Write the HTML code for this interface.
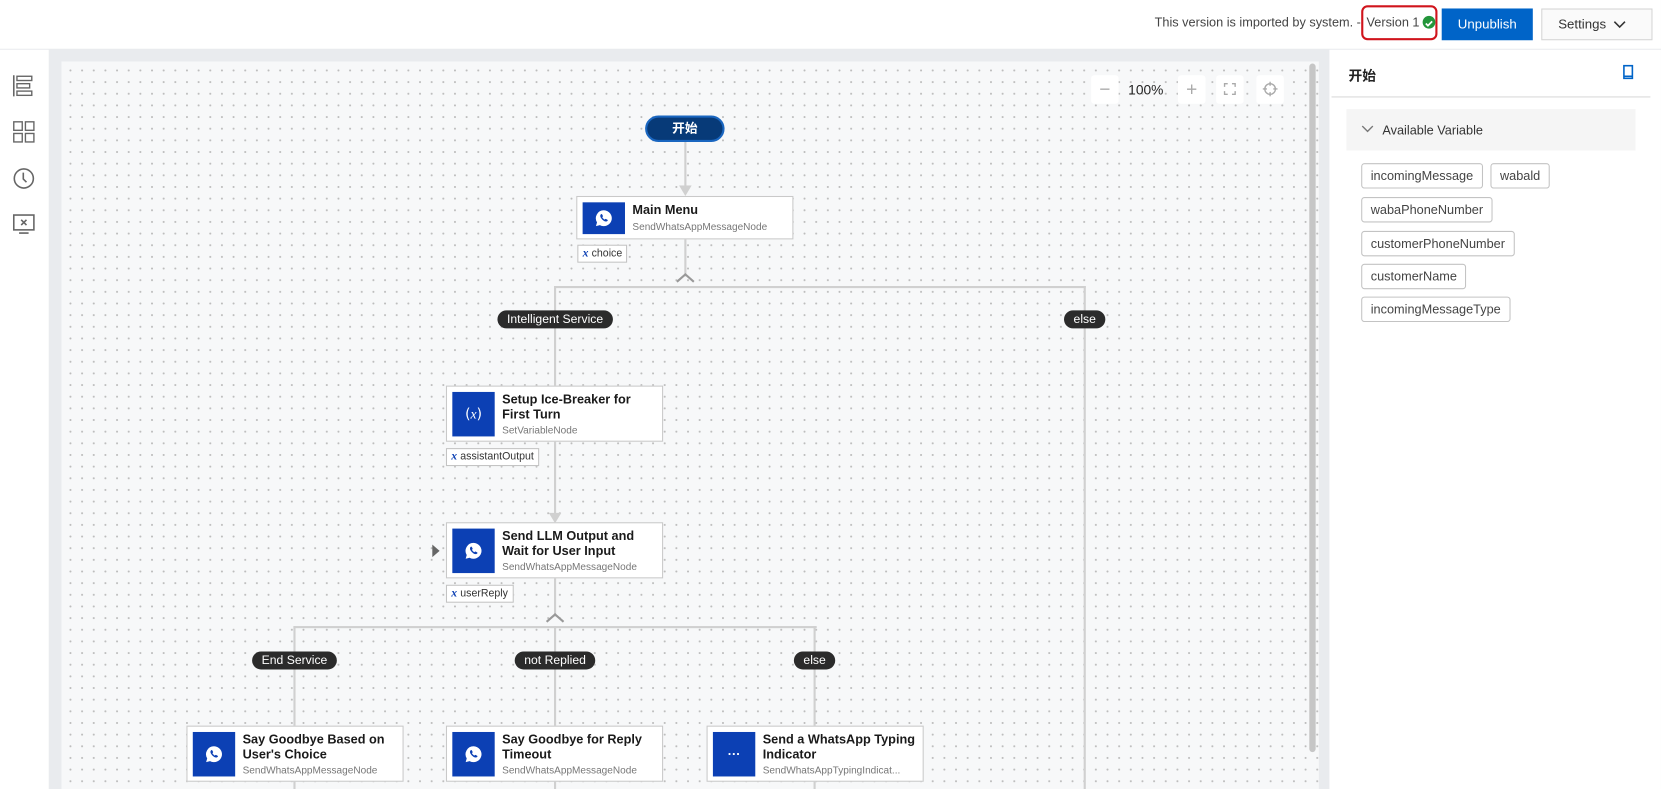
<!DOCTYPE html>
<html><head><meta charset="utf-8"><style>
*{box-sizing:border-box;margin:0;padding:0}
html,body{width:1661px;height:789px;overflow:hidden}
body{background:#e9ebee;font-family:"Liberation Sans","Noto Sans CJK SC",sans-serif;position:relative;color:#222}
#w{position:absolute;left:0;top:0;width:1568px;height:745px;transform:scale(1.0593);transform-origin:0 0;overflow:hidden}
.a{position:absolute}
#top{left:0;top:0;width:1568px;height:46px;background:#fff}
#side{left:0;top:47px;width:46px;height:698px;background:#fff}
#canvas{left:58px;top:58px;width:1187px;height:687px;background-color:#f7f8f9;background-image:radial-gradient(circle,#bdbdbd 0.8px,transparent 1.1px);background-size:11px 11px;background-position:3px 3px;overflow:hidden}
#panel{left:1255px;top:47px;width:313px;height:698px;background:#fff}
.vl{position:absolute;width:2px;background:#d0d0d0}
.hl{position:absolute;height:2px;background:#d0d0d0}
.node{position:absolute;background:#fff;border:1px solid #c9c9c9;width:205px}
.ic{position:absolute;left:5px;top:5px;width:40px;background:#0c40b4;display:flex;align-items:center;justify-content:center;color:#fff}
.tt{position:absolute;left:52px;font-size:12px;font-weight:bold;line-height:14px;color:#1a1a1a}
.st{position:absolute;left:52px;font-size:9.5px;color:#777;white-space:nowrap}
.tag{position:absolute;height:17px;border:1px solid #c3c3c3;background:#fff;font-size:10px;color:#333;line-height:15px;padding:0 4px}
.tag i{font-family:"Liberation Serif",serif;color:#0c40b4;font-weight:bold;font-size:11px;margin-right:3px}
.lab{position:absolute;height:17px;border-radius:9px;background:#2b2b2b;color:#fff;font-size:11.5px;display:flex;align-items:center;padding:1px 9px 0;transform:translateX(-50%);white-space:nowrap}
.zb{position:absolute;top:13px;width:26px;height:27px;background:#fff;border-radius:3px;color:#aaa;text-align:center;line-height:26px;font-size:18px}
.vt{position:absolute;height:24px;border:1px solid #c3c3c3;border-radius:3px;font-size:12px;color:#444;line-height:22px;padding:0 8px}
</style></head><body><div id="w">
<div id="top" class="a">
 <div class="a" style="left:1090px;top:14px;font-size:12px;color:#444">This version is imported by system. - </div>
 <div class="a" style="left:1285px;top:5px;width:72px;height:33px;border:2px solid #d0141c;border-radius:6px"></div>
 <div class="a" style="left:1290px;top:14px;font-size:12px;color:#444">Version 1</div>
 <div class="a" style="left:1343px;top:15px;width:12px;height:12px;border-radius:50%;background:#23953a"><svg width="12" height="12"><path d="M3 6.2l2 2 4-4" stroke="#fff" stroke-width="1.6" fill="none"/></svg></div>
 <div class="a" style="left:1361px;top:8px;width:86px;height:30px;background:#0064c8;color:#fff;font-size:12.5px;text-align:center;line-height:30px">Unpublish</div>
 <div class="a" style="left:1455px;top:8px;width:105px;height:30px;border:1px solid #d5d5d5;background:#fafafa;font-size:12.5px;line-height:28px;padding-left:15px;color:#333">Settings <svg width="12" height="8" style="margin-left:3px"><path d="M1 1.5l5 5 5-5" stroke="#333" stroke-width="1.5" fill="none"/></svg></div>
</div>
<div id="side" class="a">
 <svg class="a" style="left:12px;top:23px" width="20" height="22"><path d="M1 1v20" stroke="#666" stroke-width="1.5"/><rect x="4" y="2" width="14" height="4" fill="none" stroke="#666" stroke-width="1.3"/><rect x="4" y="9" width="12" height="4" fill="none" stroke="#666" stroke-width="1.3"/><rect x="4" y="16" width="14" height="4" fill="none" stroke="#666" stroke-width="1.3"/></svg>
 <svg class="a" style="left:12px;top:67px" width="21" height="21"><rect x="1" y="1" width="8" height="8" fill="none" stroke="#666" stroke-width="1.3"/><rect x="12" y="1" width="8" height="8" fill="none" stroke="#666" stroke-width="1.3"/><rect x="1" y="12" width="8" height="8" fill="none" stroke="#666" stroke-width="1.3"/><rect x="12" y="12" width="8" height="8" fill="none" stroke="#666" stroke-width="1.3"/></svg>
 <svg class="a" style="left:12px;top:111px" width="21" height="21"><circle cx="10.5" cy="10.5" r="9" fill="none" stroke="#666" stroke-width="1.5"/><path d="M10 5v6l3 3" stroke="#666" stroke-width="1.5" fill="none"/></svg>
 <svg class="a" style="left:12px;top:155px" width="21" height="20"><rect x="1" y="1" width="19" height="14" fill="none" stroke="#666" stroke-width="1.5"/><path d="M8 5.5l5 5M13 5.5l-5 5M6 18h9" stroke="#666" stroke-width="1.5"/></svg>
</div>
<div id="canvas" class="a">
 <div class="vl" style="left:588px;top:76px;height:46px"></div>
 <svg class="a" style="left:583px;top:117px" width="12" height="10"><path d="M0 0h12L6 10z" fill="#d0d0d0"/></svg>
 <div class="a" style="left:551px;top:51px;width:75px;height:25px;border-radius:13px;background:#073a78;border:2px solid #1a66c0;color:#fff;font-size:12px;text-align:center;line-height:21px;font-weight:bold">开始</div>

 <div class="vl" style="left:588px;top:167px;height:36px"></div>
 <svg class="a" style="left:580px;top:199px" width="18" height="10"><path d="M1 9l8-7 8 7" stroke="#999" stroke-width="2" fill="none"/></svg>
 <div class="hl" style="left:465px;top:212px;width:502px"></div>
 <div class="vl" style="left:465px;top:212px;height:94px"></div>
 <div class="vl" style="left:965px;top:212px;height:520px"></div>
 <div class="lab" style="left:466px;top:235px">Intelligent Service</div>
 <div class="lab" style="left:966px;top:235px">else</div>

 <div class="node" style="left:486px;top:127px;height:41px"><div class="ic" style="height:30px"><svg width="18" height="18" viewBox="0 0 18 18"><path d="M9 1.5a7.5 7.5 0 0 0-6.4 11.4L1.6 16.5l3.7-1A7.5 7.5 0 1 0 9 1.5z" fill="#fff"/><path d="M6.3 5.3c.4-.4.9-.3 1.1.1l.7 1.3c.2.4 0 .7-.3 1l-.3.3c.5 1 1.3 1.8 2.3 2.3l.3-.3c.3-.3.6-.5 1-.3l1.3.7c.4.2.5.7.1 1.1-.9.9-2 .8-3.3.1A8 8 0 0 1 6.2 8.6c-.7-1.3-.8-2.4.1-3.3z" fill="#0c40b4"/></svg></div>
  <div class="tt" style="top:5px">Main Menu</div><div class="st" style="top:23px">SendWhatsAppMessageNode</div></div>
 <div class="tag" style="left:487px;top:173px"><i>x</i>choice</div>

 <div class="node" style="left:363px;top:306px;height:53px"><div class="ic" style="height:42px;font-size:13px;font-family:'DejaVu Sans',sans-serif">(<i style="font-family:'Liberation Serif',serif">x</i>)</div>
  <div class="tt" style="top:5px">Setup Ice-Breaker for<br>First Turn</div><div class="st" style="top:36px">SetVariableNode</div></div>
 <div class="tag" style="left:363px;top:365px"><i>x</i>assistantOutput</div>
 <div class="vl" style="left:465px;top:359px;height:73px"></div>
 <svg class="a" style="left:460px;top:426px" width="12" height="10"><path d="M0 0h12L6 10z" fill="#d0d0d0"/></svg>

 <svg class="a" style="left:350px;top:456px" width="7" height="12"><path d="M0 0l7 6-7 6z" fill="#666"/></svg>
 <div class="node" style="left:363px;top:435px;height:53px"><div class="ic" style="height:42px"><svg width="18" height="18" viewBox="0 0 18 18"><path d="M9 1.5a7.5 7.5 0 0 0-6.4 11.4L1.6 16.5l3.7-1A7.5 7.5 0 1 0 9 1.5z" fill="#fff"/><path d="M6.3 5.3c.4-.4.9-.3 1.1.1l.7 1.3c.2.4 0 .7-.3 1l-.3.3c.5 1 1.3 1.8 2.3 2.3l.3-.3c.3-.3.6-.5 1-.3l1.3.7c.4.2.5.7.1 1.1-.9.9-2 .8-3.3.1A8 8 0 0 1 6.2 8.6c-.7-1.3-.8-2.4.1-3.3z" fill="#0c40b4"/></svg></div>
  <div class="tt" style="top:5px">Send LLM Output and<br>Wait for User Input</div><div class="st" style="top:36px">SendWhatsAppMessageNode</div></div>
 <div class="tag" style="left:363px;top:494px"><i>x</i>userReply</div>
 <div class="vl" style="left:465px;top:488px;height:36px"></div>
 <svg class="a" style="left:457px;top:520px" width="18" height="10"><path d="M1 9l8-7 8 7" stroke="#999" stroke-width="2" fill="none"/></svg>
 <div class="hl" style="left:219px;top:533px;width:494px"></div>
 <div class="vl" style="left:219px;top:533px;height:200px"></div>
 <div class="vl" style="left:465px;top:533px;height:200px"></div>
 <div class="vl" style="left:710px;top:533px;height:200px"></div>
 <div class="lab" style="left:220px;top:557px">End Service</div>
 <div class="lab" style="left:466px;top:557px">not Replied</div>
 <div class="lab" style="left:711px;top:557px">else</div>

 <div class="node" style="left:118px;top:627px;height:53px"><div class="ic" style="height:42px"><svg width="18" height="18" viewBox="0 0 18 18"><path d="M9 1.5a7.5 7.5 0 0 0-6.4 11.4L1.6 16.5l3.7-1A7.5 7.5 0 1 0 9 1.5z" fill="#fff"/><path d="M6.3 5.3c.4-.4.9-.3 1.1.1l.7 1.3c.2.4 0 .7-.3 1l-.3.3c.5 1 1.3 1.8 2.3 2.3l.3-.3c.3-.3.6-.5 1-.3l1.3.7c.4.2.5.7.1 1.1-.9.9-2 .8-3.3.1A8 8 0 0 1 6.2 8.6c-.7-1.3-.8-2.4.1-3.3z" fill="#0c40b4"/></svg></div>
  <div class="tt" style="top:5px">Say Goodbye Based on<br>User's Choice</div><div class="st" style="top:36px">SendWhatsAppMessageNode</div></div>
 <div class="node" style="left:363px;top:627px;height:53px"><div class="ic" style="height:42px"><svg width="18" height="18" viewBox="0 0 18 18"><path d="M9 1.5a7.5 7.5 0 0 0-6.4 11.4L1.6 16.5l3.7-1A7.5 7.5 0 1 0 9 1.5z" fill="#fff"/><path d="M6.3 5.3c.4-.4.9-.3 1.1.1l.7 1.3c.2.4 0 .7-.3 1l-.3.3c.5 1 1.3 1.8 2.3 2.3l.3-.3c.3-.3.6-.5 1-.3l1.3.7c.4.2.5.7.1 1.1-.9.9-2 .8-3.3.1A8 8 0 0 1 6.2 8.6c-.7-1.3-.8-2.4.1-3.3z" fill="#0c40b4"/></svg></div>
  <div class="tt" style="top:5px">Say Goodbye for Reply<br>Timeout</div><div class="st" style="top:36px">SendWhatsAppMessageNode</div></div>
 <div class="node" style="left:609px;top:627px;height:53px"><div class="ic" style="height:42px;font-size:12px;font-weight:bold">···</div>
  <div class="tt" style="top:5px">Send a WhatsApp Typing<br>Indicator</div><div class="st" style="top:36px">SendWhatsAppTypingIndicat...</div></div>

 <div class="zb" style="left:972px">−</div>
 <div class="a" style="left:1007px;top:19px;font-size:13px;color:#222">100%</div>
 <div class="zb" style="left:1054px">+</div>
 <div class="zb" style="left:1090px"><svg width="12" height="12" style="margin-top:7px"><path d="M1 4V1h3M8 1h3v3M11 8v3H8M4 11H1V8" stroke="#aaa" stroke-width="1.3" fill="none"/></svg></div>
 <div class="zb" style="left:1128px"><svg width="14" height="14" style="margin-top:6px"><circle cx="7" cy="7" r="5" stroke="#aaa" stroke-width="1.3" fill="none"/><path d="M7 0v4M7 10v4M0 7h4M10 7h4" stroke="#aaa" stroke-width="1.3"/></svg></div>
 <div class="a" style="left:1178px;top:2px;width:6px;height:650px;background:#c6c6c6;border-radius:3px"></div>
</div>
<div id="panel" class="a">
 <div class="a" style="left:18px;top:14px;font-size:13px;font-weight:bold;color:#222">开始</div>
 <svg class="a" style="left:276px;top:14px" width="12" height="14"><path d="M2 1h8v12H2zM2 11h8" stroke="#0064c8" stroke-width="1.5" fill="none"/></svg>
 <div class="a" style="left:2px;top:44px;width:301px;height:1px;background:#d8d8d8"></div>
 <div class="a" style="left:16px;top:56px;width:273px;height:39px;background:#f5f5f5"></div>
 <svg class="a" style="left:30px;top:71px" width="12" height="8"><path d="M1 1l5 5 5-5" stroke="#777" stroke-width="1.3" fill="none"/></svg>
 <div class="a" style="left:50px;top:69px;font-size:12px;color:#333">Available Variable</div>
 <div class="vt" style="left:30px;top:107px">incomingMessage</div>
 <div class="vt" style="left:152px;top:107px">wabald</div>
 <div class="vt" style="left:30px;top:139px">wabaPhoneNumber</div>
 <div class="vt" style="left:30px;top:171px">customerPhoneNumber</div>
 <div class="vt" style="left:30px;top:202px">customerName</div>
 <div class="vt" style="left:30px;top:233px">incomingMessageType</div>
</div>
</div></body></html>
